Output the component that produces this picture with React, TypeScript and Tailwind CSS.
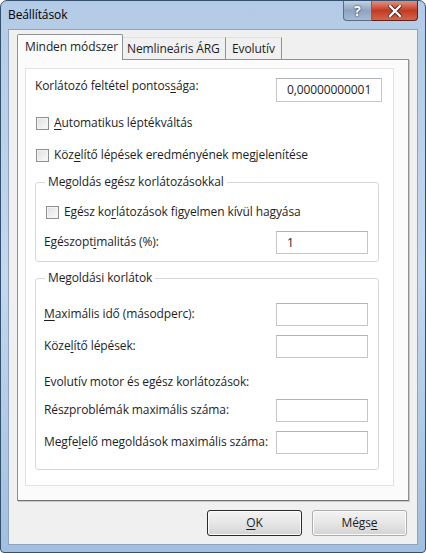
import React from 'react';

const font = { fontFamily: '"Open Sans", "Noto Sans", sans-serif' };

function U({ children }: { children: React.ReactNode }) {
    return <span className="underline underline-offset-2">{children}</span>;
}

function CheckBox({ label }: { label: React.ReactNode }) {
    return (
        <div className="flex items-center h-[16px]">
            <div className="w-[13px] h-[13px] border border-[#8e8f8f] bg-gradient-to-br from-[#dedede] to-[#fbfbfb] shadow-[inset_0_0_0_1px_#f4f4f4]" />
            <span className="ml-[5px] leading-[16px]">{label}</span>
        </div>
    );
}

function TextBox({ value, width, height }: { value?: string; width: number; height: number }) {
    return (
        <div
            className="border border-[#c3c6cc] border-t-[#aeb2b9] bg-white pl-[10px] flex items-center leading-[16px]"
            style={{ width, height }}
        >
            {value}
        </div>
    );
}

function FieldRow({ label, value, mt }: { label: React.ReactNode; value?: string; mt: string }) {
    return (
        <div className={`flex items-center justify-between pl-[8px] ${mt}`}>
            <span className="leading-[16px] -mt-[2px]">{label}</span>
            <TextBox value={value} width={92} height={23} />
        </div>
    );
}

export default function App() {
    return (
        <div
            className="w-[426px] h-[553px] flex flex-col rounded-t-[7px] rounded-b-[4px] border border-[#34506f] bg-gradient-to-b from-[#b3cbe6] via-[#c4d8ee] to-[#a2bfdf] text-[12px] text-[#1e1e1e] tracking-[-0.1px] overflow-hidden"
            style={font}
        >
            {/* Title bar */}
            <div className="h-[28px] flex items-start justify-between pl-[7px] pr-[7px]">
                <span className="mt-[6px] text-[12px] leading-[16px] text-black">Beállítások</span>
                <div className="flex">
                    <div className="w-[29px] h-[20px] border border-[#5b6d86] border-t-0 rounded-bl-[4px] bg-gradient-to-b from-[#c3d1e2] via-[#8ea4c0] to-[#a6bad2] flex items-center justify-center">
                        <span className="text-white font-bold text-[14px] leading-[16px] drop-shadow-[0_0_1px_#1f2f45]">?</span>
                    </div>
                    <div className="w-[46px] h-[20px] border border-[#5e2219] border-t-0 border-l-0 rounded-br-[4px] bg-gradient-to-b from-[#e0907e] via-[#c23a22] to-[#d2654c] flex items-center justify-center">
                        <svg width="14" height="12" viewBox="0 0 14 12">
                            <path d="M2 1 L12 11 M12 1 L2 11" stroke="#4a1a12" strokeWidth="4" strokeLinecap="square" />
                            <path d="M2 1 L12 11 M12 1 L2 11" stroke="white" strokeWidth="2.4" strokeLinecap="square" />
                        </svg>
                    </div>
                </div>
            </div>

            {/* Client area */}
            <div className="mx-[7px] mb-[7px] flex-1 flex flex-col bg-[#f0f0f0] border border-[#8ea3bc] px-[8px] pt-[4px] pb-[8px]">
                {/* Tabs */}
                <div className="flex items-end h-[26px] relative z-10 whitespace-nowrap">
                    <div className="w-[106px] h-[26px] bg-[#fbfbfb] border border-b-0 border-[#8e9196] rounded-t-[2px] pl-[7px] pt-[4px] leading-[16px]">
                        Minden módszer
                    </div>
                    <div className="w-[103px] h-[22px] mb-[1px] border-r border-[#8e9196] border-t border-t-[#e3e3e3] pl-[4px] pt-[3px] leading-[16px]">
                        Nemlineáris ÁRG
                    </div>
                    <div className="w-[56px] h-[22px] mb-[1px] border-r border-[#8e9196] border-t border-t-[#e3e3e3] pl-[6px] pt-[3px] leading-[16px]">
                        Evolutív
                    </div>
                </div>

                {/* Tab page */}
                <div className="-mt-[1px] h-[442px] bg-[#fbfbfb] border border-[#8e9196] border-b-[#6f7276] shadow-[1px_1px_0_#c9c9c9] pl-[7px] pr-[14px] pt-[8px] pb-[14px] flex">
                    <div className="flex-1 bg-white border border-[#e2e2e2] pl-[9px] pr-[14px] flex flex-col">
                        <div className="flex items-start justify-between mt-[9px]">
                            <span className="leading-[16px]">
                                Korlátozó feltétel pontos<U>s</U>ága:
                            </span>
                            <div className="-mr-[3px]">
                                <TextBox value="0,00000000001" width={106} height={24} />
                            </div>
                        </div>

                        <div className="mt-[13px] pl-[1px]">
                            <CheckBox label={<><U>A</U>utomatikus léptékváltás</>} />
                        </div>
                        <div className="mt-[16px] pl-[1px]">
                            <CheckBox label={<>Köz<U>e</U>lítő lépések eredményének megjelenítése</>} />
                        </div>

                        <fieldset className="mt-[11px] border border-[#d5d9de] rounded-[3px] pr-[10px] pb-[7px]">
                            <legend className="ml-[9px] px-[3px] leading-[16px]">Megoldás egész korlátozásokkal</legend>
                            <div className="mt-[14px] pl-[10px]">
                                <CheckBox label={<>Egész ko<U>r</U>látozások figyelmen kívül hagyása</>} />
                            </div>
                            <FieldRow mt="mt-[11px]" value="1" label={<>Egészopt<U>i</U>malitás (%):</>} />
                        </fieldset>

                        <fieldset className="mt-[8px] border border-[#d5d9de] rounded-[3px] pr-[10px] pb-[15px]">
                            <legend className="ml-[9px] px-[3px] leading-[16px]">Megoldási korlátok</legend>
                            <FieldRow mt="mt-[17px]" label={<><U>M</U>aximális idő (másodperc):</>} />
                            <FieldRow mt="mt-[9px]" label={<>Köze<U>l</U>ítő lépések:</>} />
                            <div className="mt-[16px] pl-[8px] leading-[16px]">Evolutív motor és egész korlátozások:</div>
                            <FieldRow mt="mt-[9px]" label="Részproblémák maximális száma:" />
                            <FieldRow mt="mt-[9px]" label={<>Megfe<U>l</U>elő megoldások maximális száma:</>} />
                        </fieldset>
                    </div>
                </div>

                {/* Buttons */}
                <div className="flex justify-end gap-[10px] mt-[9px] pr-[2px]">
                    <button className="w-[95px] h-[26px] rounded-[3px] border border-[#2b2b2b] bg-gradient-to-b from-[#f3f3f3] via-[#e6e6e6] to-[#d3d3d3] shadow-[inset_0_0_0_1px_#fcfcfc] leading-[16px]">
                        <U>O</U>K
                    </button>
                    <button className="w-[95px] h-[26px] rounded-[3px] border border-[#acacac] bg-gradient-to-b from-[#f3f3f3] via-[#e6e6e6] to-[#d3d3d3] shadow-[inset_0_0_0_1px_#fcfcfc] leading-[16px]">
                        Mégs<U>e</U>
                    </button>
                </div>
            </div>
        </div>
    );
}
